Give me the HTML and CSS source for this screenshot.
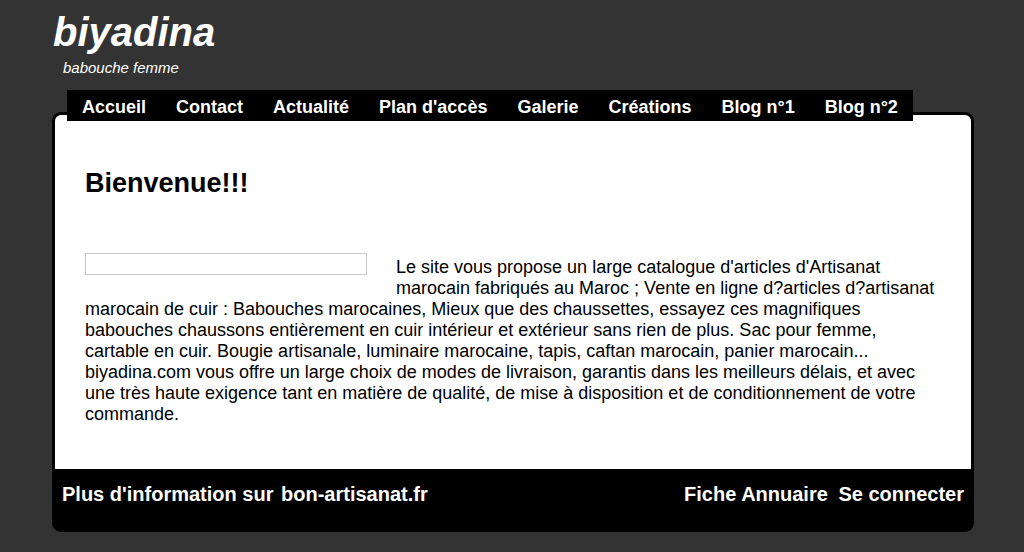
FILE: index.html
```html
<!DOCTYPE html>
<html lang="fr">
<head>
    <meta charset="UTF-8">
    <title>biyadina</title>
    <link rel="stylesheet" href="styles.css">
</head>
<body>
    <div id="header">
        <div class="siteTitle">biyadina</div>
        <div class="siteSlogan">babouche femme</div>
    </div>
    <ul id="menu">
        <li><a href="#">Accueil</a></li>
        <li><a href="#">Contact</a></li>
        <li><a href="#">Actualité</a></li>
        <li><a href="#">Plan d'accès</a></li>
        <li><a href="#">Galerie</a></li>
        <li><a href="#">Créations</a></li>
        <li><a href="#">Blog n°1</a></li>
        <li><a href="#">Blog n°2</a></li>
    </ul>
    <div id="wrapper">
        <div id="content">
            <h1>Bienvenue!!!</h1>
            <div class="intro">
                <div class="picture"></div>
                <p>Le site vous propose un large catalogue d'articles d'Artisanat marocain fabriqués au Maroc ; Vente en ligne d?articles d?artisanat marocain de cuir : Babouches marocaines, Mieux que des chaussettes, essayez ces magnifiques babouches chaussons entièrement en cuir intérieur et extérieur sans rien de plus. Sac pour femme, cartable en cuir. Bougie artisanale, luminaire marocaine, tapis, caftan marocain, panier marocain... biyadina.com vous offre un large choix de modes de livraison, garantis dans les meilleurs délais, et avec une très haute exigence tant en matière de qualité, de mise à disposition et de conditionnement de votre commande.</p>
            </div>
        </div>
        <div id="footer">
            <div class="footLeft">
                <a href="#">Plus d'information sur</a>
                <a href="#">bon-artisanat.fr</a>
            </div>
            <div class="footRight">
                <a href="#">Fiche Annuaire</a>
                <a href="#">Se connecter</a>
            </div>
        </div>
    </div>
</body>
</html>
```
FILE: styles.css
```css
body {
    margin: 0;
    background: #333333;
    font-family: "Liberation Sans", Arial, sans-serif;
    color: #000;
}
a {
    color: #fff;
    text-decoration: none;
}
/* Kopfbereich */
#header {
    padding: 9px 0 0 53px;
    height: 90px;
    box-sizing: border-box;
}
.siteTitle {
    font-size: 40px;
    font-weight: bold;
    font-style: italic;
    color: #fff;
    line-height: 46px;
}
.siteSlogan {
    font-size: 15px;
    font-style: italic;
    color: #fff;
    margin: 4px 0 0 10px;
}
/* Menü */
#menu {
    list-style: none;
    margin: 0 0 -9px 67px;
    padding: 0;
    display: flex;
    width: max-content;
    background: #000;
    position: relative;
    z-index: 2;
}
#menu a {
    display: block;
    padding: 3px 15px 0 15px;
    height: 28px;
    line-height: 28px;
    font-size: 18px;
    font-weight: bold;
}
/* Rahmen */
#wrapper {
    margin: 0 50px 0 52px;
    background: #000;
    border-radius: 9px;
    padding: 3px 3px 0 3px;
}
#content {
    background: #fff;
    padding: 53px 30px 44px 30px;
    border-radius: 6px 6px 0 0;
}
h1 {
    font-size: 27px;
    margin: 0 0 54px 0;
    line-height: 31px;
}
.intro {
    font-size: 18px;
    line-height: 21px;
}
.picture {
    float: left;
    width: 280px;
    height: 20px;
    border: 1px solid #c8c8c8;
    margin: 0 29px 16px 0;
}
.intro p {
    margin: 0;
    padding-top: 4px;
}
/* Fußzeile */
#footer {
    display: flex;
    justify-content: space-between;
    padding: 14px 7px 26px 7px;
    font-size: 20px;
    font-weight: bold;
    line-height: 23px;
}
.footLeft a + a {
    margin-left: 2px;
}
.footRight a + a {
    margin-left: 5px;
}
```
